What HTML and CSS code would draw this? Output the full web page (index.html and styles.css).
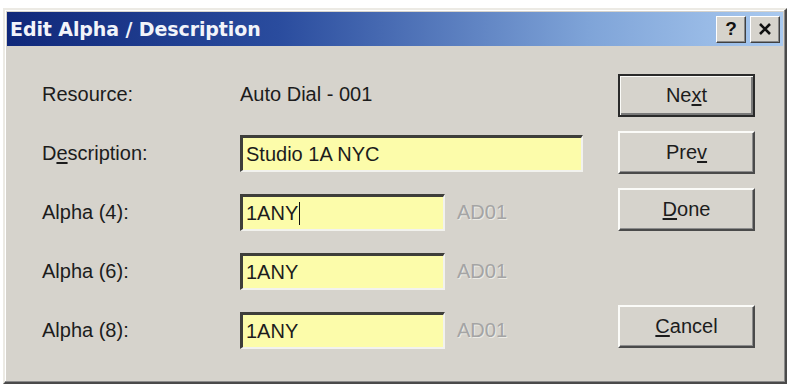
FILE: index.html
```html
<!DOCTYPE html>
<html>
<head>
<meta charset="utf-8">
<link rel="stylesheet" href="styles.css">
</head>
<body>
<div class="window">
  <div class="titlebar">
    <span class="title">Edit Alpha / Description</span>
    <div class="tbtns">
      <div class="tbtn help">?</div>
      <div class="tbtn close">
        <svg width="14" height="12" viewBox="0 0 14 12"><path d="M2 1 L12 11 M12 1 L2 11" stroke="#111" stroke-width="2.6" fill="none"/></svg>
      </div>
    </div>
  </div>
  <div class="content">
    <div class="form">
      <div class="label">Resource:</div>
      <div class="field"><span class="value">Auto Dial - 001</span></div>

      <div class="label">D<u>e</u>scription:</div>
      <div class="field"><div class="input wide">Studio 1A NYC</div></div>

      <div class="label">Alpha (4):</div>
      <div class="field"><div class="input short">1ANY<span class="caret"></span></div><span class="hint">AD01</span></div>

      <div class="label">Alpha (6):</div>
      <div class="field"><div class="input short">1ANY</div><span class="hint">AD01</span></div>

      <div class="label">Alpha (8):</div>
      <div class="field"><div class="input short">1ANY</div><span class="hint">AD01</span></div>
    </div>
    <div class="buttons">
      <div class="btn default">Ne<u>x</u>t</div>
      <div class="btn">Pre<u>v</u></div>
      <div class="btn"><u>D</u>one</div>
      <div class="btn cancel"><u>C</u>ancel</div>
    </div>
  </div>
</div>
</body>
</html>
```
FILE: styles.css
```css
html, body {
  margin: 0;
  padding: 0;
  background: #ffffff;
}
body {
  width: 792px;
  height: 387px;
  overflow: hidden;
}
.window {
  box-sizing: border-box;
  margin: 8px 0 0 3px;
  width: 784px;
  height: 376px;
  background: #d6d3cc;
  border-top: 2px solid #eceae4;
  border-left: 2px solid #eceae4;
  border-right: 2px solid #4a4a4a;
  border-bottom: 2px solid #4a4a4a;
  box-shadow: inset -1px -1px 0 #8a8a8a, inset 1px 1px 0 #ffffff;
  padding: 2px;
  display: flex;
  flex-direction: column;
  font-family: "Liberation Sans", Arial, sans-serif;
  color: #1c1c1c;
}
.titlebar {
  height: 34px;
  background: linear-gradient(to right, #10287a 0%, #2a4c9e 35%, #7fa4d8 75%, #a9c9ef 100%);
  display: flex;
  align-items: center;
  justify-content: space-between;
  padding: 0 3px 0 3px;
}
.title {
  font-family: "DejaVu Sans", Verdana, sans-serif;
  font-weight: bold;
  font-size: 19px;
  color: #f2f4fa;
  letter-spacing: -0.1px;
}
.tbtns {
  display: flex;
  gap: 4px;
}
.tbtn {
  box-sizing: border-box;
  width: 30px;
  height: 27px;
  background: #d6d3cc;
  border-top: 1px solid #ffffff;
  border-left: 1px solid #ffffff;
  border-right: 1px solid #404040;
  border-bottom: 1px solid #404040;
  box-shadow: inset -1px -1px 0 #888;
  display: flex;
  align-items: center;
  justify-content: center;
}
.help {
  font-family: "Liberation Sans", Arial, sans-serif;
  font-weight: bold;
  font-size: 19px;
  color: #111;
}
.content {
  flex: 1;
  display: flex;
  padding: 30px 28px 0 35px;
}
.form {
  display: grid;
  grid-template-columns: 198px 345px;
  grid-auto-rows: 37px;
  row-gap: 22px;
  align-items: center;
}
.label, .value {
  font-size: 20px;
}
.field {
  display: flex;
  align-items: center;
  height: 37px;
}
.input {
  box-sizing: border-box;
  height: 37px;
  background: #fcfcaa;
  border-top: 3px solid #3e3e3a;
  border-left: 3px solid #3e3e3a;
  border-right: 2px solid #f2f2ee;
  border-bottom: 2px solid #f2f2ee;
  font-size: 20px;
  padding-left: 3px;
  display: flex;
  align-items: center;
}
.wide { width: 343px; }
.short { width: 205px; }
.caret {
  display: inline-block;
  width: 0;
  height: 23px;
  border-left: 1px solid #111;
  margin-left: 1px;
}
.hint {
  margin-left: 12px;
  font-size: 20px;
  color: #a4a4a4;
  text-shadow: 1px 1px 0 #ecebe6;
}
.buttons {
  margin-left: auto;
  display: flex;
  flex-direction: column;
  gap: 14px;
  padding-top: -2px;
  margin-top: -2px;
}
.btn {
  box-sizing: border-box;
  width: 137px;
  height: 43px;
  background: #d6d3cc;
  border-top: 2px solid #fbfbf8;
  border-left: 2px solid #fbfbf8;
  border-right: 2px solid #4a4a4a;
  border-bottom: 2px solid #4a4a4a;
  box-shadow: inset -1px -1px 0 #8c8c8c;
  font-size: 20px;
  display: flex;
  align-items: center;
  justify-content: center;
}
.btn.default {
  border: 2px solid #2a2a2a;
  box-shadow: inset 1px 1px 0 #fbfbf8, inset -2px -2px 0 #7a7a7a;
}
.btn.cancel {
  margin-top: 60px;
}
u {
  text-underline-offset: 2px;
}
```
